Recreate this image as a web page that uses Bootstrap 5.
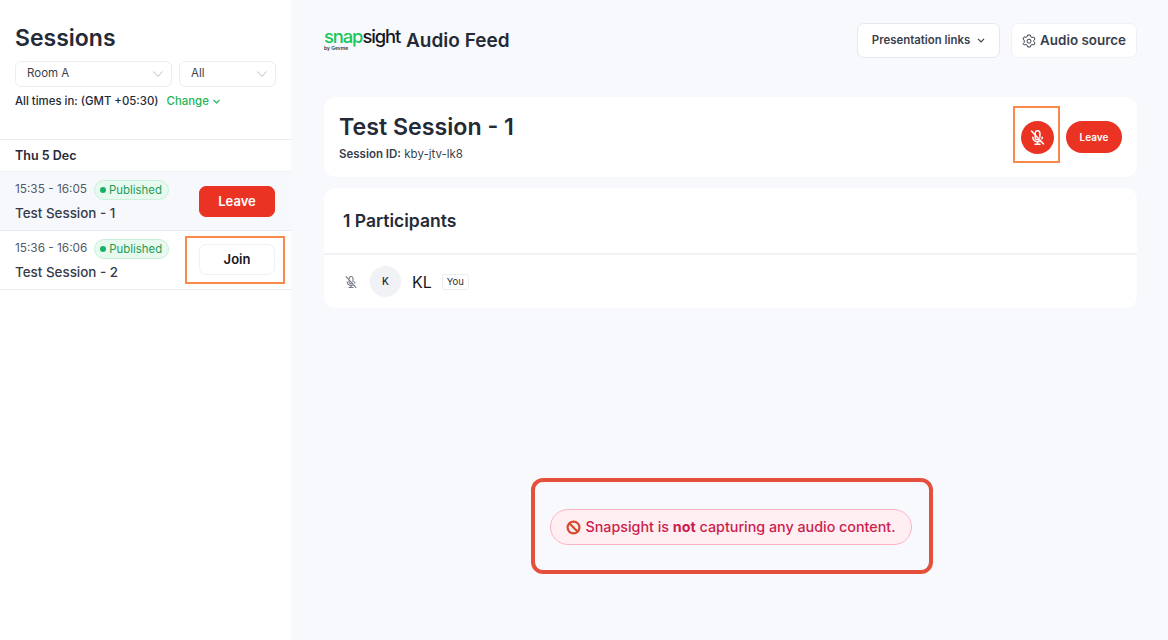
<!DOCTYPE html>
<html lang="en">
<head>
    <meta charset="UTF-8">
    <meta name="viewport" content="width=device-width, initial-scale=1">
    <title>Audio Feed</title>
    <link href="https://cdn.jsdelivr.net/npm/bootstrap@5.3.0/dist/css/bootstrap.min.css" rel="stylesheet">
    <style>
        html, body { height: 100%; }
        body {
            font-family: Inter, "Liberation Sans", sans-serif;
            color: #252a37;
            background: #f8f9fd;
            overflow: hidden;
        }
        .page-wrap { height: 640px; }
        .side-panel { width: 291px; flex: none; background: #fff; }
        .side-top { padding: 22px 15px 0; height: 140px; border-bottom: 1px solid #e8ebee; }
        .side-title { font-size: 23px; font-weight: 600; line-height: 32px; margin: 0 0 7px; }
        .filter-line { width: 261px; }
        .fake-select {
            height: 26px;
            border: 1px solid #e8f0ee;
            border-radius: 6px;
            font-size: 11.5px;
            padding-left: 11px;
            padding-right: 8px;
            color: #3b404c;
        }
        .room-select { width: 157px; }
        .all-select { width: 97px; }
        .tz-line { font-size: 11.4px; font-weight: 500; margin-top: 6px; line-height: 16px; }
        .change-link { color: #22b455; margin-left: 5px; text-decoration: none; }
        .day-head { font-size: 12.5px; font-weight: 600; height: 31px; padding: 8px 15px 0; line-height: 16px; }
        .sess-row { height: 59px; padding: 0 16px 0 15px; border-bottom: 1px solid #e8ebf0; }
        .sess-row.active-row { background: #f7f8fc; border-top: 1px solid #eff1f5; height: 60px; }
        .sess-time { font-size: 11.8px; color: #535a68; white-space: nowrap; }
        .sess-name { font-size: 13.4px; font-weight: 500; color: #363b48; line-height: 18px; margin-top: 4px; }
        .pub-pill {
            font-size: 11.4px;
            color: #1d9c57;
            background: #e8f9ef;
            border: 1px solid #c9f0d9;
            border-radius: 20px;
            padding: 0 6px 0 5px;
            line-height: 18px;
            margin-left: 7px;
            white-space: nowrap;
        }
        .pub-dot { width: 6px; height: 6px; border-radius: 50%; background: #16b364; display: inline-block; margin-right: 3px; vertical-align: 1px; }
        .sess-btn {
            width: 76px;
            height: 31px;
            border-radius: 7px;
            font-size: 13px;
            font-weight: 600;
            padding: 0;
        }
        .active-row .sess-btn { margin-top: 1px; }
        .join-wrap { margin-bottom: 1px; }
        .btn-red, .btn-red:hover { background: #ea3323; border: 1px solid #ea3323; color: #fff; }
        .btn-plain, .btn-plain:hover { background: #fff; border: 1px solid #f0f1f4; color: #14161c; }
        .mark-box { position: absolute; border: 2px solid #f98a4b; pointer-events: none; }
        .join-mark { left: -14px; top: -8px; width: 100px; height: 48px; }
        .mic-mark { left: -8px; top: -15px; width: 47px; height: 57px; }

        .main-panel { padding: 23px 31px 0 33px; min-width: 0; }
        .logo-box { width: 75px; line-height: 1; margin-top: -3px; }
        .logo-word { font-size: 18.4px; font-weight: 500; letter-spacing: -1.1px; color: #15171c; display: block; line-height: 18px; white-space: nowrap; }
        .logo-word b { font-weight: 500; color: #19c65a; }
        .logo-by { font-size: 5px; font-weight: 600; display: block; color: #333; margin-top: 1px; }
        .feed-title { font-size: 19px; font-weight: 600; margin: 0 0 0 7px; line-height: 35px; }
        .top-btn {
            height: 35px;
            background: #fff;
            border: 1px solid #e6e8ef;
            border-radius: 7px;
            font-weight: 600;
            color: #3a3f4c;
            padding: 0;
        }
        .links-btn { width: 143px; font-size: 11.4px; }
        .source-btn { width: 126px; font-size: 13.4px; border-color: #f0f1f5; margin-left: 11px; }
        .plain-card { background: #fff; border-radius: 12px; }
        .sess-card { height: 80px; margin-top: 39px; padding: 0 15px; }
        .sess-heading { font-size: 23.2px; font-weight: 600; line-height: 29px; margin: 1px 0 0; }
        .sess-id { font-size: 11.5px; line-height: 16px; margin-top: 4px; color: #3a3f4c; }
        .sess-id b { font-weight: 600; }
        .mic-round { width: 33px; height: 33px; border-radius: 50%; background: #ea3323; }
        .leave-round {
            width: 56px;
            height: 32px;
            border-radius: 16px;
            background: #ea3323;
            color: #fff;
            border: 0;
            font-size: 10px;
            font-weight: 600;
            padding: 0;
            margin-left: 12px;
        }
        .part-card { height: 120px; margin-top: 11px; }
        .part-head { height: 67px; padding: 20px 19px 0; border-bottom: 2px solid #f1f2f5; font-size: 17.5px; font-weight: 600; line-height: 26px; }
        .part-row { height: 53px; padding-left: 20px; }
        .avatar-dot { width: 31px; height: 31px; border-radius: 50%; background: #f1f2f6; font-size: 10px; font-weight: 500; margin-left: 12px; color: #22252d; }
        .part-name { font-size: 16px; margin-left: 11px; color: #14161c; }
        .you-tag { font-size: 9.5px; border: 1px solid #eceef1; border-radius: 3px; padding: 0 4px; line-height: 14px; margin-left: 10px; color: #333; }
        .alert-frame {
            width: 402px;
            height: 96px;
            margin: 170px 0 0 207px;
            border: 4px solid #e5503c;
            border-radius: 12px;
            padding: 2px 0 0 15px;
        }
        .no-audio {
            width: 362px;
            height: 36px;
            border-radius: 18px;
            background: #ffeef2;
            border: 1px solid #ffb3c3;
            color: #cc1d4e;
            font-size: 14.3px;
            font-weight: 500;
            white-space: nowrap;
        }
        .no-audio b { font-weight: 700; }
    </style>
</head>
<body>
    <div class="page-wrap d-flex">
        <!-- left column -->
        <div class="side-panel">
            <div class="side-top">
                <h1 class="side-title">Sessions</h1>
                <div class="filter-line d-flex justify-content-between">
                    <div class="fake-select room-select d-flex align-items-center justify-content-between">
                        <span>Room A</span>
                        <svg width="10" height="6" viewBox="0 0 10 6" fill="none" stroke="#b9bec6"><path d="M.5.5 5 5.5 9.5.5"/></svg>
                    </div>
                    <div class="fake-select all-select d-flex align-items-center justify-content-between">
                        <span>All</span>
                        <svg width="10" height="6" viewBox="0 0 10 6" fill="none" stroke="#b9bec6"><path d="M.5.5 5 5.5 9.5.5"/></svg>
                    </div>
                </div>
                <div class="tz-line">All times in: (GMT +05:30) <a class="change-link" href="#">Change<svg width="7" height="5" viewBox="0 0 7 5" fill="none" stroke="#22b455" stroke-width="1.1" class="ms-1"><path d="M.5 1 3.5 4 6.5 1"/></svg></a></div>
            </div>
            <div class="day-head">Thu 5 Dec</div>

            <div class="sess-row active-row d-flex align-items-center justify-content-between">
                <div>
                    <div class="d-flex align-items-center">
                        <span class="sess-time">15:35 - 16:05</span>
                        <span class="pub-pill"><i class="pub-dot"></i>Published</span>
                    </div>
                    <div class="sess-name">Test Session - 1</div>
                </div>
                <button class="btn btn-red sess-btn">Leave</button>
            </div>
            <div class="sess-row d-flex align-items-center justify-content-between">
                <div>
                    <div class="d-flex align-items-center">
                        <span class="sess-time">15:36 - 16:06</span>
                        <span class="pub-pill"><i class="pub-dot"></i>Published</span>
                    </div>
                    <div class="sess-name">Test Session - 2</div>
                </div>
                <div class="join-wrap position-relative">
                    <button class="btn btn-plain sess-btn d-block">Join</button>
                    <span class="mark-box join-mark"></span>
                </div>
            </div>
        </div>

        <!-- main column -->
        <div class="main-panel flex-grow-1">
            <div class="d-flex align-items-center justify-content-between">
                <div class="d-flex align-items-center">
                    <div class="logo-box">
                        <span class="logo-word"><b>snap</b>sight</span>
                        <span class="logo-by">by Gevme</span>
                    </div>
                    <h2 class="feed-title">Audio Feed</h2>
                </div>
                <div class="d-flex">
                    <button class="btn top-btn links-btn">Presentation links
                        <svg width="8" height="5" viewBox="0 0 8 5" fill="none" stroke="#3a3f4c" stroke-width="1.2" class="ms-1"><path d="M1 .8 4 3.8 7 .8"/></svg>
                    </button>
                    <button class="btn top-btn source-btn d-flex align-items-center justify-content-center">
                        <svg width="14" height="14" viewBox="0 0 14 14" fill="none" stroke="#3a3f4c" stroke-width="1" class="me-1"><path d="M5.7 1h2.600l.4 1.700 1.400.8 1.700-.5 1.200 2.100-1.200 1.200v1.400l1.200 1.200-1.200 2.100-1.700-.5-1.400.8-.4 1.700H5.700l-.4-1.700-1.400-.8-1.700.5L1 9.700l1.200-1.200V6.100L1 4.900 2.200 2.800l1.700.5 1.400-.8z"/><circle cx="7" cy="7.200" r="2"/></svg>
                        Audio source
                    </button>
                </div>
            </div>

            <div class="plain-card sess-card d-flex align-items-center justify-content-between">
                <div>
                    <h2 class="sess-heading">Test Session - 1</h2>
                    <div class="sess-id"><b>Session ID:</b> kby-jtv-lk8</div>
                </div>
                <div class="d-flex align-items-center">
                    <div class="position-relative">
                        <div class="mic-round d-flex align-items-center justify-content-center">
                            <svg width="17" height="17" viewBox="0 0 17 17" fill="none" stroke="#fff" stroke-width="1.5" stroke-linecap="round"><path d="M6.200 5V4a2.400 2.400 0 0 1 4.700-.5v4.700M10.200 10.200a2.400 2.400 0 0 1-4-1.700V6.800"/><path d="M3.800 8.200a4.700 4.700 0 0 0 7.800 3.400M13.200 8.200c0 .6-.1 1.100-.3 1.600M8.500 13v2M6 15.200h5M2.500 2l12 13"/></svg>
                        </div>
                        <span class="mark-box mic-mark"></span>
                    </div>
                    <button class="leave-round">Leave</button>
                </div>
            </div>

            <div class="plain-card part-card">
                <div class="part-head">1 Participants</div>
                <div class="part-row d-flex align-items-center">
                    <svg width="14" height="14" viewBox="0 0 17 17" fill="none" stroke="#737985" stroke-width="1.3" stroke-linecap="round"><path d="M6.200 5V4a2.400 2.400 0 0 1 4.700-.5v4.700M10.200 10.200a2.400 2.400 0 0 1-4-1.700V6.800"/><path d="M3.800 8.200a4.700 4.700 0 0 0 7.800 3.400M13.200 8.200c0 .6-.1 1.100-.3 1.600M8.500 13v2M6 15.200h5M2.500 2l12 13"/></svg>
                    <div class="avatar-dot d-flex align-items-center justify-content-center">K</div>
                    <span class="part-name">KL</span>
                    <span class="you-tag">You</span>
                </div>
            </div>

            <div class="alert-frame d-flex align-items-center">
                <div class="no-audio d-flex align-items-center justify-content-center">
                    <svg width="15" height="15" viewBox="0 0 16 16" fill="none" class="me-1"><circle cx="8" cy="8" r="6.300" fill="#f4f0ee" stroke="#d8492e" stroke-width="2.400"/><path d="M3.800 3.800l8.400 8.400" stroke="#d8492e" stroke-width="2.400"/></svg>
                    <span>Snapsight is <b>not</b> capturing any audio content.</span>
                </div>
            </div>
        </div>
    </div>
    <script src="https://cdn.jsdelivr.net/npm/bootstrap@5.3.0/dist/js/bootstrap.bundle.min.js"></script>
</body>
</html>
